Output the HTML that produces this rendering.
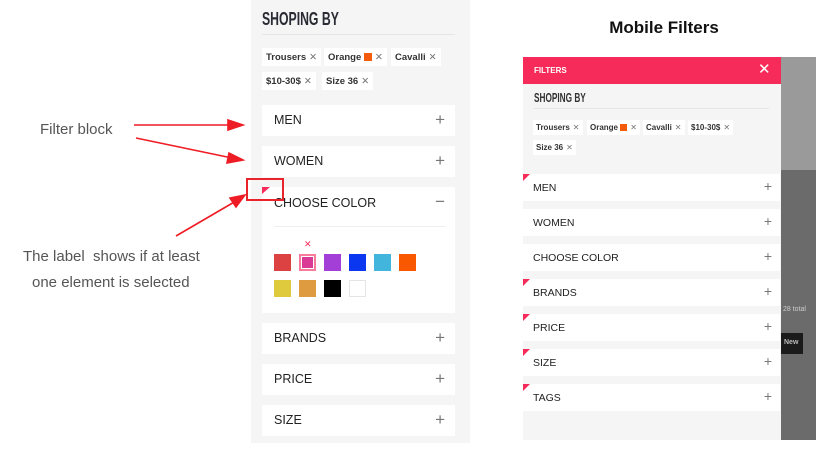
<!DOCTYPE html>
<html><head><meta charset="utf-8"><style>
*{margin:0;padding:0;box-sizing:border-box}
body{width:833px;height:460px;background:#fff;position:relative;overflow:hidden;font-family:"Liberation Sans",sans-serif;color:#222}
.a{position:absolute}
.blk{position:absolute;background:#fff;left:262px;width:193px;height:31px}
.blk span{position:absolute;left:12px;top:8px;font-size:12.5px;color:#222}
.blk i{position:absolute;right:10px;top:5px;font-style:normal;font-size:17px;color:#777;font-weight:300}
.tag{position:absolute;background:#fff;height:18px;font-size:9.5px;font-weight:bold;color:#333;padding:4px 4px;white-space:nowrap}
.tag b{font-weight:normal;color:#777;margin-left:3px}
.sw{position:absolute;width:17px;height:17px}
.mb{position:absolute;background:#fff;left:523px;width:257px;height:27px}
.mb span{position:absolute;left:10px;top:8px;font-size:10.5px;color:#222}
.mb i{position:absolute;right:8px;top:4px;font-style:normal;font-size:14px;color:#777}
.tri{position:absolute;width:0;height:0;border-top:7px solid #f72b5a;border-right:7px solid transparent}
.mt{position:absolute;background:#fff;height:15px;font-size:8px;font-weight:bold;color:#333;padding:3px 3px;white-space:nowrap}
.mt b{font-weight:normal;color:#777;margin-left:3px}
.ann{position:absolute;font-size:15px;color:#555;font-weight:300;white-space:nowrap}
</style></head><body>
<div class="a" style="left:251px;top:0;width:219px;height:443px;background:#f5f5f5"></div>
<div class="a" style="left:262px;top:9px;font-size:18px;font-weight:bold;color:#2a2a35;transform:scaleX(.68);transform-origin:left">SHOPING BY</div>
<div class="a" style="left:262px;top:34px;width:193px;height:1px;background:#e6e6e6"></div>
<div class="tag" style="left:262px;top:48px">Trousers<b>✕</b></div>
<div class="tag" style="left:324px;top:48px">Orange <span style="display:inline-block;width:8px;height:8px;background:#f45c0b;vertical-align:-1px"></span><b>✕</b></div>
<div class="tag" style="left:391px;top:48px">Cavalli<b>✕</b></div>
<div class="tag" style="left:262px;top:72px">$10-30$<b>✕</b></div>
<div class="tag" style="left:322px;top:72px">Size 36<b>✕</b></div>
<div class="blk" style="top:105px"><span>MEN</span><i>+</i></div>
<div class="blk" style="top:146px"><span>WOMEN</span><i>+</i></div>
<div class="blk" style="top:187px;height:126px"><span style="top:9px">CHOOSE COLOR</span><i style="top:5px">−</i>
<div class="a" style="left:12px;top:39px;width:171px;height:1px;background:#eee"></div></div>
<div class="a" style="left:304px;top:239px;font-size:9px;color:#f72b5a">✕</div>
<div class="sw" style="left:274px;top:254px;background:#dc4242"></div>
<div class="sw" style="left:299px;top:254px;border:2px solid #f77b9a;background:#d83a96;box-shadow:inset 0 0 0 1px #fff"></div>
<div class="sw" style="left:324px;top:254px;background:#a33fd6"></div>
<div class="sw" style="left:349px;top:254px;background:#0c37f0"></div>
<div class="sw" style="left:374px;top:254px;background:#41b5dc"></div>
<div class="sw" style="left:399px;top:254px;background:#fa5800"></div>
<div class="sw" style="left:274px;top:280px;background:#dfc93c"></div>
<div class="sw" style="left:299px;top:280px;background:#de9b3f"></div>
<div class="sw" style="left:324px;top:280px;background:#000"></div>
<div class="sw" style="left:349px;top:280px;background:#fff;border:1px solid #e5e5e5"></div>
<div class="blk" style="top:323px"><span>BRANDS</span><i>+</i></div>
<div class="blk" style="top:364px"><span>PRICE</span><i>+</i></div>
<div class="blk" style="top:405px"><span>SIZE</span><i>+</i></div>
<div class="a" style="left:246px;top:178px;width:38px;height:23px;border:2px solid #e8232a"></div>
<div class="tri" style="left:262px;top:187px;border-top-width:7px;border-right-width:8px"></div>
<div class="ann" style="left:40px;top:121px">Filter block</div>
<div class="ann" style="left:23px;top:248px">The label &nbsp;shows if at least</div>
<div class="ann" style="left:32px;top:274px">one element is selected</div>
<svg class="a" style="left:0;top:0" width="833" height="460">
<g stroke="#ee1c25" stroke-width="1.6" fill="#ee1c25">
<line x1="134" y1="125" x2="232" y2="125"/><polygon points="243,125 228,120 228,130"/>
<line x1="136" y1="138" x2="232" y2="158"/><polygon points="243,160 229,153 227,163"/>
<line x1="176" y1="236" x2="236" y2="201"/><polygon points="245,195 230,198 236,207"/>
</g></svg>
<div class="a" style="left:520px;top:18px;width:288px;text-align:center;font-size:17px;font-weight:bold;color:#111">Mobile Filters</div>
<div class="a" style="left:781px;top:57px;width:35px;height:383px;background:#6b6b6b"></div>
<div class="a" style="left:781px;top:57px;width:35px;height:113px;background:#9a9a9a"></div>
<div class="a" style="left:783px;top:306px;font-size:7px;color:#ccc">28 total</div>
<div class="a" style="left:781px;top:333px;width:22px;height:21px;background:#1b1b1b;color:#bbb;font-size:7px;font-weight:bold;padding:6px 3px">New</div>
<div class="a" style="left:523px;top:57px;width:258px;height:383px;background:#f5f5f5"></div>
<div class="a" style="left:523px;top:57px;width:258px;height:27px;background:#f72b5a"></div>
<div class="a" style="left:534px;top:66px;font-size:8px;font-weight:bold;color:#fff">FILTERS</div>
<div class="a" style="left:758px;top:60px;font-size:15px;color:#fff">✕</div>
<div class="a" style="left:534px;top:91px;font-size:12.5px;font-weight:bold;color:#333;transform:scaleX(.66);transform-origin:left">SHOPING BY</div>
<div class="a" style="left:534px;top:108px;width:235px;height:1px;background:#e6e6e6"></div>
<div class="mt" style="left:533px;top:120px">Trousers<b>✕</b></div>
<div class="mt" style="left:587px;top:120px">Orange <span style="display:inline-block;width:7px;height:7px;background:#f45c0b;vertical-align:-1px"></span><b>✕</b></div>
<div class="mt" style="left:643px;top:120px">Cavalli<b>✕</b></div>
<div class="mt" style="left:688px;top:120px">$10-30$<b>✕</b></div>
<div class="mt" style="left:533px;top:140px">Size 36<b>✕</b></div>
<div class="mb" style="top:174px"><span>MEN</span><i>+</i></div><div class="tri" style="left:523px;top:174px"></div>
<div class="mb" style="top:209px"><span>WOMEN</span><i>+</i></div>
<div class="mb" style="top:244px"><span>CHOOSE COLOR</span><i>+</i></div>
<div class="mb" style="top:279px"><span>BRANDS</span><i>+</i></div><div class="tri" style="left:523px;top:279px"></div>
<div class="mb" style="top:314px"><span>PRICE</span><i>+</i></div><div class="tri" style="left:523px;top:314px"></div>
<div class="mb" style="top:349px"><span>SIZE</span><i>+</i></div><div class="tri" style="left:523px;top:349px"></div>
<div class="mb" style="top:384px"><span>TAGS</span><i>+</i></div><div class="tri" style="left:523px;top:384px"></div>
</body></html>
